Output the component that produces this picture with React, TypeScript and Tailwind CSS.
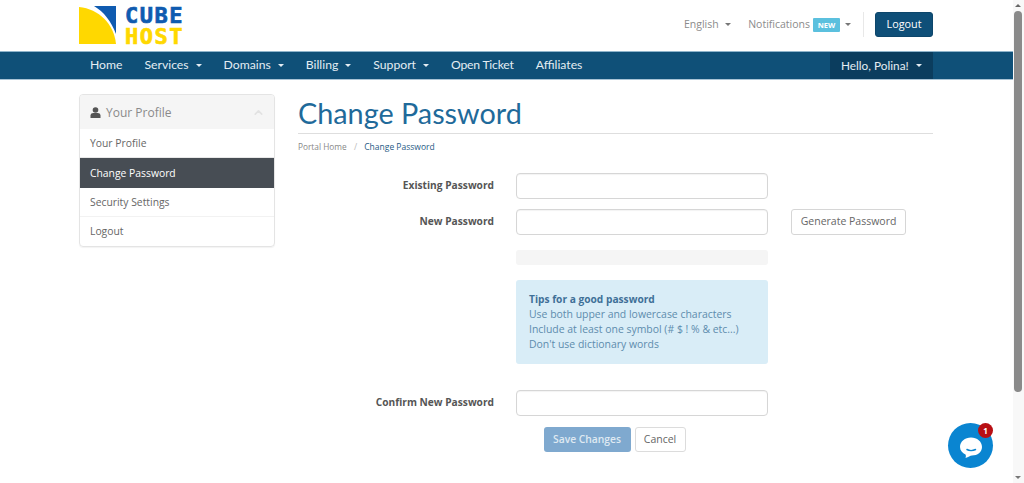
import { ChevronUp } from "lucide-react";

const sans = "font-['Open_Sans',sans-serif]";
const head = "font-['Lato',sans-serif]";

function Caret({ className = "" }: { className?: string }) {
  return <span className={`inline-block w-0 h-0 border-x-[3.5px] border-x-transparent border-t-[3.5px] ${className}`} />;
}

function Logo() {
  return (
    <div className="flex items-start gap-[9px] mt-[6px]">
      <svg width="37" height="38" viewBox="0 0 37 38">
        <path d="M0 1 C20 3 35 18 37 38 H0 Z" fill="#ffd800" />
        <path d="M15 0 H37 V28 C32 15 25 6 15 0 Z" fill="#0f5bb0" />
      </svg>
      <div className="flex flex-col -mt-[1px] font-['DejaVu_Sans_Mono',monospace] font-bold text-[22px] leading-[21px] tracking-[1.5px] [-webkit-text-stroke:0.7px]">
        <span className="text-[#0f5bb0]">CUBE</span>
        <span className="text-[#ffd800]">HOST</span>
      </div>
    </div>
  );
}

function NavItem({ label, caret, tight }: { label: string; caret?: boolean; tight?: boolean }) {
  return (
    <div className="h-full px-[11px] flex items-center gap-[7px] text-[#e4edf3]">
      <span className={tight ? "tracking-[-0.2px]" : ""}>{label}</span>
      {caret && <Caret className="border-t-[#e4edf3]" />}
    </div>
  );
}

function Field({ label, extra }: { label: string; extra?: React.ReactNode }) {
  return (
    <div className="flex items-center h-[26px]">
      <div className="w-[196px] text-right font-bold text-[#555] text-[10.2px]">{label}</div>
      <div className="w-[252px] h-[26px] ml-[22px] bg-white border border-[#d6d6d6] rounded-[4px] shadow-[inset_0_1px_1px_rgba(0,0,0,0.05)] shrink-0" />
      {extra}
    </div>
  );
}

export default function App() {
  return (
    <div className={`relative flex h-[483px] w-[1024px] overflow-hidden bg-white ${sans}`}>
      <div className="w-[1013px] shrink-0">
        <header className="h-[51px] pl-[79px] pr-[80px] flex items-start justify-between">
          <Logo />
          <div className="flex items-center h-[49px] text-[10.5px] text-[#8b8b8b]">
            <span>English</span>
            <Caret className="ml-[6px] border-t-[#777]" />
            <span className="ml-[17.5px]">Notifications</span>
            <span className="ml-[3px] w-[27px] text-center bg-[#5bc0de] text-white text-[7.5px] font-bold h-[14px] leading-[14px] rounded-[1px]">NEW</span>
            <Caret className="ml-[5px] border-t-[#777]" />
            <div className="w-px h-[25px] bg-[#e8e8e8] ml-[12px]" />
            <button className="ml-[11px] w-[58px] h-[25px] bg-[#0f4f78] text-white rounded-[3px] text-[10.8px] border border-[#0d466b]">Logout</button>
          </div>
        </header>

        <nav className={`h-[29px] bg-[#0f5078] border-y border-[#8fb4cb] border-b-[#a9c4d6] pl-[79px] pr-[80px] flex items-center justify-between text-[12.2px] ${head}`}>
          <div className="flex items-center h-full">
            <NavItem label="Home" />
            <NavItem label="Services" caret />
            <NavItem label="Domains" caret />
            <NavItem label="Billing" caret />
            <NavItem label="Support" caret />
            <NavItem label="Open Ticket" tight />
            <NavItem label="Affiliates" />
          </div>
          <div className="h-full w-[103px] bg-[#0b3d5e] flex items-center pl-[11px] gap-[7px] text-[#e4edf3] text-[11.8px]">
            <span>Hello, Polina!</span>
            <Caret className="border-t-[#e4edf3]" />
          </div>
        </nav>

        <main className="flex pl-[79px] pr-[80px] pt-[14px]">
          <aside className="w-[196px] shrink-0">
            <div className="border border-[#e4e4e4] rounded-[4px] overflow-hidden shadow-[0_1px_1px_rgba(0,0,0,0.05)] text-[10.35px] text-[#666]">
              <div className="h-[34px] pt-[1px] bg-[#f5f5f5] flex items-center justify-between pl-[10px] pr-[9px]">
                <div className="flex items-center gap-[5px]">
                  <svg width="11" height="11" viewBox="0 0 11 11">
                    <circle cx="5.5" cy="3" r="2.8" fill="#555" />
                    <path d="M0.5 11 V8.5 C0.5 6.8 2 6 3.2 6 H7.8 C9 6 10.5 6.8 10.5 8.5 V11 Z" fill="#555" />
                  </svg>
                  <span className="text-[12px] text-[#8a8a8a]">Your Profile</span>
                </div>
                <ChevronUp size={13} className="text-[#e2e2e2]" strokeWidth={3} />
              </div>
              <div className="h-[29px] pt-[1px] flex items-center px-[10px] border-b border-[#e8e8e8]">Your Profile</div>
              <div className="h-[30px] pt-[1px] flex items-center px-[10px] bg-[#474d54] text-white">Change Password</div>
              <div className="h-[29px] pt-[1px] flex items-center px-[10px] border-b border-[#f2f2f2]">Security Settings</div>
              <div className="h-[29px] flex items-center px-[10px]">Logout</div>
            </div>
          </aside>

          <section className="ml-[23px] flex-1 min-w-0">
            <h1 className={`text-[28.8px] leading-[38px] text-[#1f6a9a] border-b border-[#dedede] h-[40px] ${head}`}>Change Password</h1>
            <div className="mt-[7px] text-[8.6px] leading-[12px] text-[#888]">
              <span className="text-[8.3px]">Portal Home</span> <span className="mx-[5px] text-[#bbb]">/</span> <span className="text-[8.5px] text-[#1f5a85]">Change Password</span>
            </div>
            <div className="mt-[20px]">
              <Field label="Existing Password" />
              <div className="h-[10px]" />
              <Field
                label="New Password"
                extra={
                  <button className="ml-[23px] w-[115px] h-[26px] bg-white border border-[#d6d6d6] rounded-[3px] text-[#666] text-[10.5px]">
                    Generate Password
                  </button>
                }
              />
              <div className="ml-[218px] w-[252px]">
                <div className="mt-[15px] h-[15px] bg-[#f5f5f5] rounded-[3px]" />
                <div className="mt-[15px] h-[84px] bg-[#d9edf7] rounded-[3px] px-[13px] pt-[12px] text-[10.45px] leading-[15px] text-[#5d8cad]">
                  <div className="font-bold text-[#3f7097] text-[10.2px]">Tips for a good password</div>
                  <div>Use both upper and lowercase characters</div>
                  <div>Include at least one symbol (# $ ! % &amp; etc...)</div>
                  <div>Don't use dictionary words</div>
                </div>
              </div>
              <div className="h-[26px]" />
              <Field label="Confirm New Password" />
              <div className="flex justify-center gap-[4px] mt-[11px] pr-[2px]">
                <button className="w-[87px] h-[25px] bg-[#7fa9cf] text-[#dfe9f2] rounded-[3px] text-[10.3px] font-semibold">Save Changes</button>
                <button className="w-[51px] h-[25px] bg-white border border-[#dcdcdc] rounded-[3px] text-[#666] text-[10.5px]">Cancel</button>
              </div>
            </div>
          </section>
        </main>
      </div>

      <div className="w-[11px] h-full bg-[#f8f8f8] flex flex-col items-start pl-[1px] relative">
        <Caret className="mt-[4px] ml-[1px] rotate-180 border-t-[#666]" />
        <div className="mt-[4px] w-[8px] h-[381px] bg-[#8a8a8a] rounded-[4px]" />
        <Caret className="absolute bottom-[4px] left-[2px] border-t-[#777]" />
      </div>

      <div className="absolute left-[948px] top-[423px] w-[45px] h-[45px] rounded-full bg-[#0a85d1] flex items-center justify-center">
        <svg width="24" height="24" viewBox="0 0 24 24" className="mt-[3px] ml-[1px]">
          <path d="M12 2.5 C18 2.5 23 6.5 23 12 C23 17 18.5 20.5 13 20.5 C11 20.5 9.5 22 6.5 23 C7 21.5 7 20.5 6.5 19.5 C3.5 18 1 15.5 1 12 C1 6.5 6 2.5 12 2.5 Z" fill="#fff" />
          <path d="M8 14.5 C10 15.8 14 15.8 16.5 14.5" stroke="#0a85d1" strokeWidth="1.5" fill="none" strokeLinecap="round" />
        </svg>
      </div>
      <div className="absolute left-[978px] top-[423px] w-[15px] h-[15px] rounded-full bg-[#b80f14] text-white text-[8px] font-bold flex items-center justify-center">1</div>
    </div>
  );
}
